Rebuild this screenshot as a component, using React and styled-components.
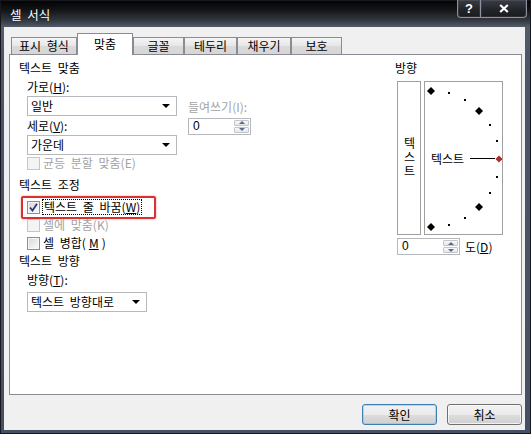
import React from 'react';
import styled, { createGlobalStyle } from 'styled-components';

const font = `"Noto Sans CJK KR", "Noto Sans", sans-serif`;

const GlobalStyle = createGlobalStyle`
  html, body { margin: 0; padding: 0; background: #fff; }
  body { font-family: ${font}; font-size: 12px; color: #000; word-spacing: 3px; }
  * { box-sizing: border-box; }
  u { text-underline-offset: 1px; }
`;

const Window = styled.div`
  width: 531px;
  height: 434px;
  display: flex;
  flex-direction: column;
  border: 1px solid #16181d;
  background: linear-gradient(180deg, #040404 0px, #141518 9px, #33373f 19px, #545b69 26px, #4e5568 60px, #465063 100%);
`;

const TitleBar = styled.div`
  height: 26px;
  flex: none;
  display: flex;
  justify-content: space-between;
  align-items: flex-start;
  padding-left: 9px;
`;

const Title = styled.div`
  margin-top: 7px;
  line-height: 14px;
  font-size: 12.5px;
  color: #fff;
  text-shadow: 0 0 6px rgba(0, 0, 0, 0.6);
`;

const CaptionButtons = styled.div`
  display: flex;
  margin: -1px 3px 0 0;
`;

const CaptionButton = styled.div`
  width: ${p => p.$w}px;
  height: 18px;
  display: flex;
  align-items: center;
  justify-content: center;
  border: 1px solid #8d939e;
  border-top: none;
  background: linear-gradient(180deg, #3a3d44 0%, #23252a 55%, #1a1b1f 100%);
  box-shadow: inset 0 0 0 1px rgba(255, 255, 255, 0.08);
  color: #fff;
  font: bold 13px "Liberation Sans", Arial, sans-serif;
  &:first-child { border-bottom-left-radius: 4px; }
  &:last-child { border-bottom-right-radius: 4px; margin-left: -1px; }
`;

const Client = styled.div`
  flex: 1;
  margin: 0 5px 3px 3px;
  background: #f0f0f0;
  display: flex;
  flex-direction: column;
  padding: 6px 3px 0 5px;
`;

const TabRow = styled.div`
  height: 21px;
  flex: none;
  display: flex;
  align-items: flex-end;
  padding-left: 2px;
`;

const Tab = styled.div`
  width: ${p => p.$w}px;
  height: ${p => (p.$active ? 22 : 17)}px;
  margin-bottom: ${p => (p.$active ? -1 : 0)}px;
  position: relative;
  z-index: ${p => (p.$active ? 1 : 0)};
  display: flex;
  align-items: center;
  justify-content: center;
  padding-bottom: ${p => (p.$active ? 2 : 0)}px;
  line-height: 14px;
  border: 1px solid #898c95;
  border-bottom: none;
  background: ${p => (p.$active ? '#fff' : 'linear-gradient(180deg, #f5f5f5 0%, #e6e6e6 50%, #dadada 51%, #d6d6d6 100%)')};
`;

const Panel = styled.div`
  height: 341px;
  flex: none;
  background: #fff;
  border: 1px solid #898c95;
  display: grid;
  grid-template-columns: 376px 1fr;
  padding: 6px 0 0 9px;
`;

const Column = styled.div`
  display: flex;
  flex-direction: column;
  align-items: flex-start;
`;

const SectionTitle = styled.div`
  line-height: 14px;
  margin-top: ${p => p.$mt || 0}px;
`;

const Label = styled.div`
  line-height: 14px;
  color: ${p => (p.$disabled ? '#a3a3a3' : '#000')};
  margin-top: ${p => p.$mt || 0}px;
  margin-left: ${p => p.$ml || 0}px;
  align-self: ${p => p.$align || 'auto'};
`;

const AlignGrid = styled.div`
  display: grid;
  grid-template-columns: 150px 1fr;
  grid-template-rows: 16px 21px 18px 20px;
  column-gap: 11px;
  margin: 5px 0 0 8px;
  align-items: start;
`;

const SelectBox = styled.div`
  width: ${p => p.$w}px;
  height: 20px;
  margin-top: ${p => p.$mt || 0}px;
  margin-left: ${p => p.$ml || 0}px;
  display: flex;
  align-items: center;
  justify-content: space-between;
  padding: 0 6px 0 3px;
  border: 1px solid #b5b8bd;
  background: #fff;
  line-height: 14px;
  &::after {
    content: '';
    border-left: 4px solid transparent;
    border-right: 4px solid transparent;
    border-top: 4px solid #000;
  }
`;

const Spin = styled.div`
  width: 63px;
  height: 17px;
  display: flex;
  align-items: center;
  border: 1px solid #b5b8bd;
  background: #fff;
  padding: 1px;
  align-self: center;
`;

const SpinValue = styled.div`
  flex: 1;
  padding-left: 3px;
  line-height: 13px;
  font-family: "Liberation Sans", Arial, sans-serif;
  font-size: 12px;
`;

const SpinButtons = styled.div`
  width: 15px;
  height: 13px;
  display: flex;
  flex-direction: column;
  gap: 1px;
`;

const SpinButton = styled.div`
  flex: 1;
  display: flex;
  align-items: center;
  justify-content: center;
  border: 1px solid #c3c6cb;
  border-radius: 1px;
  background: linear-gradient(180deg, #f9f9f9, #e4e6e9);
  &::after {
    content: '';
    border-left: 3px solid transparent;
    border-right: 3px solid transparent;
    ${p => (p.$down ? 'border-top: 3px solid #5a6a8a;' : 'border-bottom: 3px solid #5a6a8a;')}
  }
`;

const CheckRow = styled.div`
  height: ${p => p.$h || 18}px;
  margin-top: ${p => p.$mt || 0}px;
  margin-left: 8px;
  display: flex;
  align-items: center;
  gap: 3px;
  line-height: 14px;
  color: ${p => (p.$disabled ? '#a3a3a3' : '#000')};
  position: relative;
  ${p => p.$highlight && `
    &::after {
      content: '';
      position: absolute;
      left: -6px;
      top: -2px;
      width: 131px;
      bottom: -3px;
      border: 2px solid #dc2f2f;
      border-radius: 2px;
      box-shadow: 0 0 2px rgba(220, 47, 47, 0.5);
    }
  `}
`;

const CheckBox = styled.span`
  width: 13px;
  height: 13px;
  flex: none;
  display: flex;
  align-items: center;
  justify-content: center;
  border: 1px solid ${p => (p.$disabled ? '#c6c6c6' : '#8e8f8f')};
  background: ${p => (p.$disabled ? '#f4f4f4' : 'linear-gradient(135deg, #d3d5d9 0%, #eceef0 60%, #fbfbfb 100%)')};
  box-shadow: inset 0 0 0 1px ${p => (p.$disabled ? '#f4f4f4' : '#f6f6f6')};
`;

const FocusText = styled.span`
  outline: 1px dotted #000;
  outline-offset: 0px;
  padding: 0 1px;
`;

const OrientRow = styled.div`
  display: flex;
  gap: 3px;
  margin: 6px 0 0 2px;
`;

const VerticalBox = styled.div`
  width: 24px;
  height: 154px;
  border: 1px solid #a0a0a0;
  display: flex;
  align-items: center;
  justify-content: center;
`;

const VerticalText = styled.span`
  writing-mode: vertical-rl;
  text-orientation: upright;
  letter-spacing: 2px;
  line-height: 14px;
`;

const DialBox = styled.div`
  width: 79px;
  height: 154px;
  border: 1px solid #a0a0a0;
`;

const SpinRow = styled.div`
  display: flex;
  align-items: center;
  gap: 5px;
  margin: 3px 0 0 2px;
  line-height: 14px;
`;

const Footer = styled.div`
  display: flex;
  justify-content: flex-end;
  gap: 10px;
  padding: 9px 0 0 0;
`;

const Button = styled.div`
  width: 75px;
  height: 21px;
  display: flex;
  align-items: center;
  justify-content: center;
  line-height: 14px;
  border-radius: 3px;
  border: 1px solid ${p => (p.$default ? '#3c7fb1' : '#707070')};
  background: linear-gradient(180deg, #f2f2f2 0%, #ebebeb 50%, #dddddd 51%, #cfcfcf 100%);
  box-shadow: inset 0 0 0 1px ${p => (p.$default ? 'rgba(72, 216, 251, 0.55)' : 'rgba(255, 255, 255, 0.7)')};
`;

const Check = ({ checked, disabled }) => (
  <CheckBox $disabled={disabled}>
    {checked && (
      <svg width="9" height="9" viewBox="0 0 9 9">
        <path d="M1 4.5 L3.5 7.5 L8 0.8" fill="none" stroke="#2a3a70" strokeWidth="1.8" />
      </svg>
    )}
  </CheckBox>
);

const SpinField = ({ value }) => (
  <Spin>
    <SpinValue>{value}</SpinValue>
    <SpinButtons>
      <SpinButton />
      <SpinButton $down />
    </SpinButtons>
  </Spin>
);

const Dial = () => {
  const cx = 6;
  const cy = 77;
  const r = 68;
  const marks = [];
  for (let a = 90; a >= -90; a -= 15) {
    const rad = (a * Math.PI) / 180;
    const x = cx + r * Math.cos(rad);
    const y = cy - r * Math.sin(rad);
    if (a === 0) {
      marks.push(<polygon key={a} points={`${x},${y - 3.5} ${x + 3.5},${y} ${x},${y + 3.5} ${x - 3.5},${y}`} fill="#b22a2a" />);
    } else if (Math.abs(a) === 90 || Math.abs(a) === 45) {
      marks.push(<polygon key={a} points={`${x},${y - 4} ${x + 4},${y} ${x},${y + 4} ${x - 4},${y}`} fill="#000" />);
    } else {
      marks.push(<rect key={a} x={Math.round(x) - 1} y={Math.round(y) - 1} width="2" height="2" fill="#000" />);
    }
  }
  return (
    <svg width="77" height="152" viewBox="0 0 77 152" style={{ display: 'block' }}>
      {marks}
      <line x1="45" y1="76.5" x2="70" y2="76.5" stroke="#000" strokeWidth="1" />
      <text x="6" y="76" fontSize="12" dominantBaseline="central" fontFamily={font}>텍스트</text>
    </svg>
  );
};

const tabs = [
  { label: '표시 형식', w: 66 },
  { label: '맞춤', w: 56, active: true },
  { label: '글꼴', w: 51 },
  { label: '테두리', w: 53 },
  { label: '채우기', w: 54 },
  { label: '보호', w: 51 },
];

export default function App() {
  return (
    <>
      <GlobalStyle />
      <Window>
        <TitleBar>
          <Title>셀 서식</Title>
          <CaptionButtons>
            <CaptionButton $w={24}>?</CaptionButton>
            <CaptionButton $w={47}>
              <svg width="10" height="9" viewBox="0 0 10 9">
                <path d="M1.2 1 L8.8 8 M8.8 1 L1.2 8" stroke="#fff" strokeWidth="2.2" />
              </svg>
            </CaptionButton>
          </CaptionButtons>
        </TitleBar>

        <Client>
          <TabRow>
            {tabs.map(t => (
              <Tab key={t.label} $w={t.w} $active={t.active}>{t.label}</Tab>
            ))}
          </TabRow>

          <Panel>
            <Column>
              <SectionTitle>텍스트 맞춤</SectionTitle>
              <AlignGrid>
                <Label>가로(<u>H</u>):</Label>
                <span />
                <SelectBox $w={150}>일반</SelectBox>
                <Label $disabled $align="center">들여쓰기(I):</Label>
                <Label $align="center">세로(<u>V</u>):</Label>
                <SpinField value="0" />
                <SelectBox $w={150}>가운데</SelectBox>
              </AlignGrid>
              <CheckRow $h={16} $disabled>
                <Check disabled />
                균등 분할 맞춤(E)
              </CheckRow>

              <SectionTitle $mt={7}>텍스트 조정</SectionTitle>
              <CheckRow $mt={6} $highlight>
                <Check checked />
                <FocusText>텍스트 줄 바꿈(<u>W</u>)</FocusText>
              </CheckRow>
              <CheckRow $disabled>
                <Check disabled />
                셀에 맞춤(K)
              </CheckRow>
              <CheckRow>
                <Check />
                셀 병합(<u>M</u>)
              </CheckRow>

              <SectionTitle $mt={2}>텍스트 방향</SectionTitle>
              <Label $mt={5} $ml={8}>방향(<u>T</u>):</Label>
              <SelectBox $w={120} $mt={5} $ml={8}>텍스트 방향대로</SelectBox>
            </Column>

            <Column>
              <SectionTitle>방향</SectionTitle>
              <OrientRow>
                <VerticalBox>
                  <VerticalText>텍스트</VerticalText>
                </VerticalBox>
                <DialBox>
                  <Dial />
                </DialBox>
              </OrientRow>
              <SpinRow>
                <SpinField value="0" />
                <span>도(<u>D</u>)</span>
              </SpinRow>
            </Column>
          </Panel>

          <Footer>
            <Button $default>확인</Button>
            <Button>취소</Button>
          </Footer>
        </Client>
      </Window>
    </>
  );
}
